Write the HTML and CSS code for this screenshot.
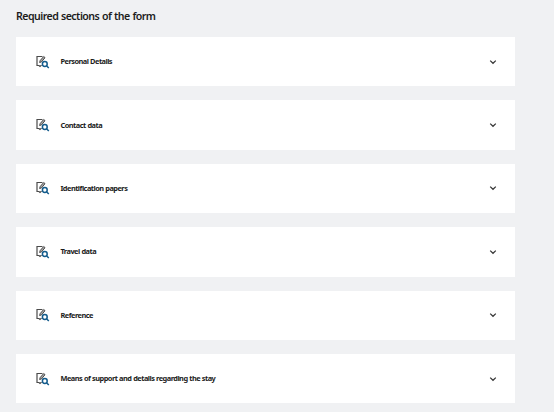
FILE: index.html
```html
<!DOCTYPE html>
<html lang="en">
<head>
    <meta charset="UTF-8">
    <meta name="viewport" content="width=device-width, initial-scale=1.0">
    <title>Required sections of the form</title>
    <link rel="stylesheet" href="styles.css">
</head>
<body>
    <svg class="symbols" aria-hidden="true">
        <symbol id="icon-edit" viewBox="0 0 14 14">
            <path class="icon-paper" d="M6.5 1.5H1V10.5H3L4 11.5L5 10.5H5.7"/>
            <path class="icon-pencil" d="M3.6 7.5L4.2 5.5L7.7 1.5L9 2.7L5.5 6.9Z"/>
            <circle class="icon-lens" cx="8.8" cy="9" r="2.4"/>
            <path class="icon-lens" d="M10.5 10.7L12.8 13"/>
        </symbol>
        <symbol id="icon-chevron" viewBox="0 0 8 6">
            <path class="icon-arrow" d="M1.2 1.6L4 4.3L6.8 1.6"/>
        </symbol>
    </svg>
    <main class="container">
        <h2>Required sections of the form</h2>
        <div class="sections">
            <button type="button" class="section">
                <svg class="section-icon"><use href="#icon-edit"/></svg>
                <span class="section-title">Personal Details</span>
                <svg class="chevron"><use href="#icon-chevron"/></svg>
            </button>
            <button type="button" class="section">
                <svg class="section-icon"><use href="#icon-edit"/></svg>
                <span class="section-title">Contact data</span>
                <svg class="chevron"><use href="#icon-chevron"/></svg>
            </button>
            <button type="button" class="section">
                <svg class="section-icon"><use href="#icon-edit"/></svg>
                <span class="section-title">Identification papers</span>
                <svg class="chevron"><use href="#icon-chevron"/></svg>
            </button>
            <button type="button" class="section">
                <svg class="section-icon"><use href="#icon-edit"/></svg>
                <span class="section-title">Travel data</span>
                <svg class="chevron"><use href="#icon-chevron"/></svg>
            </button>
            <button type="button" class="section">
                <svg class="section-icon"><use href="#icon-edit"/></svg>
                <span class="section-title">Reference</span>
                <svg class="chevron"><use href="#icon-chevron"/></svg>
            </button>
            <button type="button" class="section">
                <svg class="section-icon"><use href="#icon-edit"/></svg>
                <span class="section-title">Means of support and details regarding the stay</span>
                <svg class="chevron"><use href="#icon-chevron"/></svg>
            </button>
        </div>
    </main>
</body>
</html>
```
FILE: styles.css
```css
body {
    margin: 0;
    height: 412px;
    overflow: hidden;
    background-color: #f0f1f3;
    font-family: "Noto Sans", sans-serif;
    color: #1c1c1c;
}
.symbols {
    display: none;
}
.container {
    width: 499px;
    padding: 8px 0 0 16px;
}
.container h2 {
    margin: 0 0 13px;
    font-size: 10.6px;
    line-height: 16px;
    font-weight: 600;
    letter-spacing: -0.54px;
    word-spacing: 0.5px;
    white-space: nowrap;
}
.sections {
    display: grid;
    grid-auto-rows: 49.4px;
    gap: 14px;
}
.section {
    display: flex;
    align-items: center;
    padding: 0 18px 0 20px;
    border: none;
    background-color: #fff;
    color: inherit;
    font-family: inherit;
    text-align: left;
    cursor: pointer;
}
.section-icon {
    width: 14px;
    height: 14px;
    margin-right: 10.5px;
}
.section-title {
    flex: 1;
    padding-bottom: 1px;
    font-size: 7.4px;
    line-height: 12px;
    font-weight: 700;
    letter-spacing: -0.52px;
    word-spacing: 0.3px;
    white-space: nowrap;
}
.chevron {
    width: 8px;
    height: 6px;
}
.icon-paper,
.icon-pencil,
.icon-lens,
.icon-arrow {
    fill: none;
    stroke: #4a4a4a;
    stroke-width: 1.2;
}
.icon-pencil {
    fill: #aaa;
    stroke-width: 1;
}
.icon-lens {
    stroke: #145c8c;
    stroke-width: 1.5;
}
.icon-arrow {
    stroke: #333;
    stroke-width: 1.2;
}
```
